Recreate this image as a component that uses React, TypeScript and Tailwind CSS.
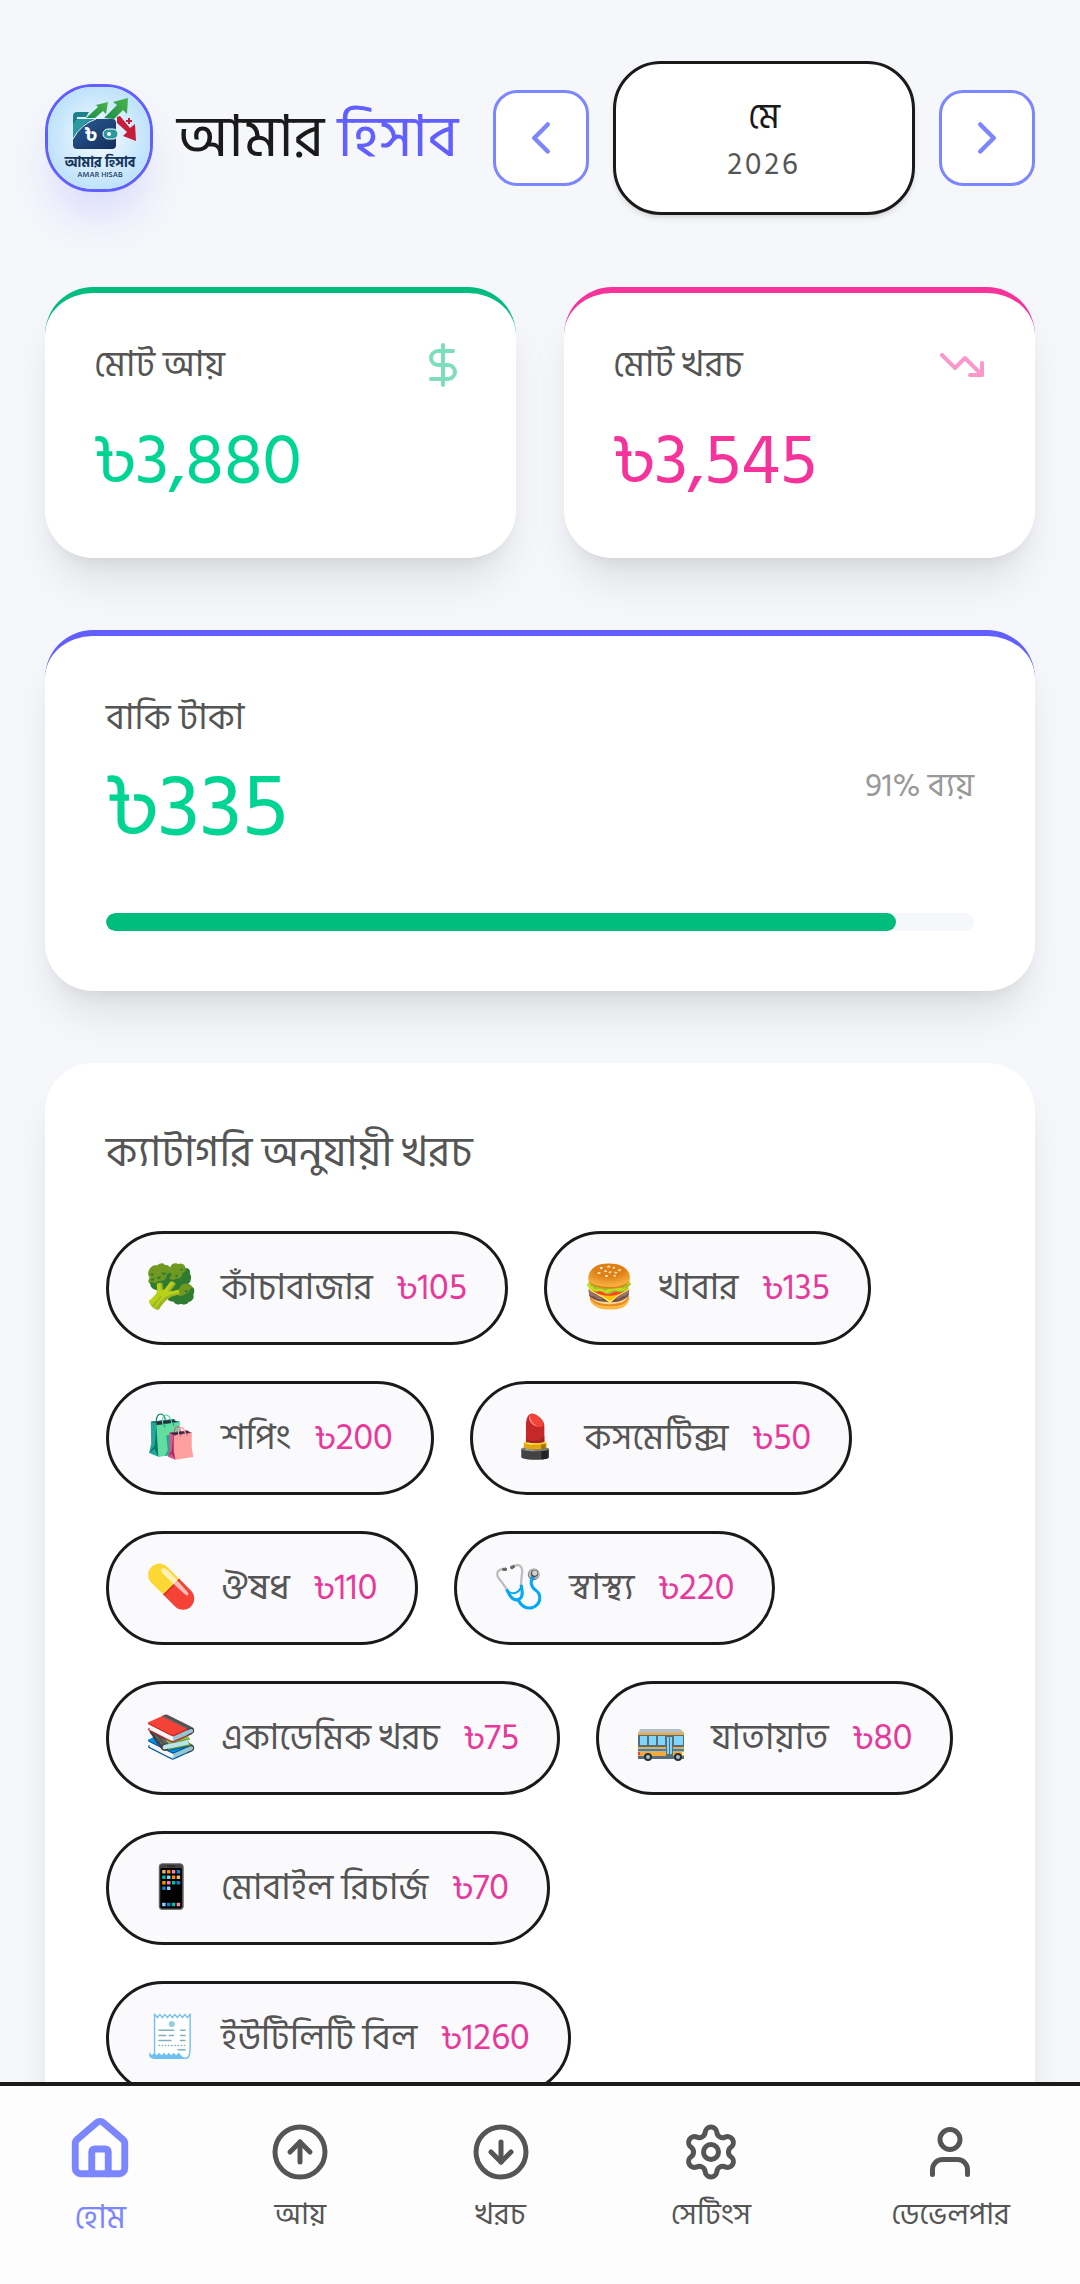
import {
  ChevronLeft,
  ChevronRight,
  CircleArrowDown,
  CircleArrowUp,
  DollarSign,
  TrendingDown,
} from "lucide-react";
import type { ReactNode } from "react";

const Logo = () => (
  <svg viewBox="8 8 102 102" className="size-full" aria-label="আমার হিসাব">
    <defs>
      <radialGradient id="sky">
        <stop offset="0.3" stopColor="#e6f4fe" />
        <stop offset="1" stopColor="#bfe3fb" />
      </radialGradient>
      <linearGradient id="wallet" x1="0" y1="0" x2="1" y2="1">
        <stop offset="0" stopColor="#2a5f97" />
        <stop offset="1" stopColor="#142c5c" />
      </linearGradient>
      <linearGradient id="leaf" x1="0" y1="1" x2="1" y2="0">
        <stop offset="0" stopColor="#1b8a4b" />
        <stop offset="1" stopColor="#4cb648" />
      </linearGradient>
    </defs>
    <rect x="8" y="8" width="102" height="102" fill="url(#sky)" />
    <path d="M37 33h12l-3 5h-9v3l-4 12V37q0-4 4-4z" fill="#1f7f8b" />
    <rect x="33" y="40" width="43" height="30" rx="4" fill="url(#wallet)" />
    <path d="M33 48q0-8 6-8h15Q41 44 33 60z" fill="#2a9aa0" />
    <path d="M33 60Q41 45 56 40" fill="none" stroke="#e6f4fe" />
    <path d="m46 39 12-11-2-2 12-3-2 12-3-3-8 7z" fill="url(#leaf)" />
    <path d="m64 39 13-13-4-3 15-4-1 16-4-4-9 9z" fill="url(#leaf)" />
    <path d="m77 38 3-1 10 12 5-4 1 17-13-5 4-4-10-9z" fill="#c41e3a" />
    <path d="M89 39v6M86 42h6" stroke="#c41e3a" strokeWidth="2" />
    <rect x="63" y="50" width="15" height="10" rx="5" fill="#2a9aa0" stroke="#fff" />
    <circle cx="69" cy="55" r="2" fill="#fff" />
    <text x="51" y="62" textAnchor="middle" fontSize="20" fontWeight="700" fill="#fff">৳</text>
    <text x="60" y="88" textAnchor="middle" fontSize="14" fontWeight="700" fill="#16365c">আমার হিসাব</text>
    <text x="60" y="98" textAnchor="middle" fontSize="8" fontWeight="500" fill="#16365c">AMAR HISAB</text>
  </svg>
);

const BusIcon = () => (
  <svg viewBox="0 -6 52 48" className="h-12 w-[52px]">
    <path d="M5 11h41q3 0 3 3v24H3V14q0-3 2-3z" fill="#f5a93b" />
    <path d="M6 9h38q3 0 4 4H4q0-4 2-4z" fill="#b9c0c4" />
    <path d="M3 15h46v12H3z" fill="#546e7a" />
    <path d="M5 16h7v9H5zM14 16h7v9h-7zM23 16h7v9h-7zM39 16h9v9h-9z" fill="#81d4fa" />
    <path d="M31 15h7v22h-7z" fill="#546e7a" />
    <path d="M32 17h2v17h-2zM35 17h2v17h-2z" fill="#81d4fa" />
    <path d="M3 30h28M38 30h11" stroke="#1e88e5" strokeWidth="2" />
    <path d="M3 36h46v3H3z" fill="#546e7a" />
    <path d="M3 32h2v3H3z" fill="#f44336" />
    <path d="M47 32h2v3h-2z" fill="#fff59d" />
    <circle cx="13" cy="37" r="4" fill="#263238" />
    <circle cx="43" cy="37" r="4" fill="#263238" />
    <circle cx="13" cy="37" r="2" fill="#b0bec5" />
    <circle cx="43" cy="37" r="2" fill="#b0bec5" />
  </svg>
);

const categories = [
  { icon: "🥦", name: "কাঁচাবাজার", amount: 105 },
  { icon: "🍔", name: "খাবার", amount: 135 },
  { icon: "🛍️", name: "শপিং", amount: 200 },
  { icon: "💄", name: "কসমেটিক্স", amount: 50 },
  { icon: "💊", name: "ঔষধ", amount: 110 },
  { icon: "🩺", name: "স্বাস্থ্য", amount: 220 },
  { icon: "📚", name: "একাডেমিক খরচ", amount: 75 },
  { icon: <BusIcon />, name: "যাতায়াত", amount: 80 },
  { icon: "📱", name: "মোবাইল রিচার্জ", amount: 70 },
  { icon: "🧾", name: "ইউটিলিটি বিল", amount: 1260 },
];

interface IStatCard {
  title: string;
  value: string;
  icon: ReactNode;
  className: string;
  valueClass: string;
}

const StatCard = ({ title, value, icon, className, valueClass }: IStatCard) => {
  return (
    <div className={`rounded-[48px] border-t-6 bg-white px-[49px] pt-12 pb-[49px] shadow-[0_30px_45px_-9px_#0000001a,0_12px_18px_-12px_#0000001a] ${className}`}>
      <div className="flex items-start justify-between">
        <p className="text-4xl leading-[48px] text-[#555]">{title}</p>
        {icon}
      </div>
      <p className={`mt-6 text-7xl leading-[96px] ${valueClass}`}>{value}</p>
    </div>
  );
};

interface INavItem {
  label: string;
  active?: boolean;
  children: ReactNode;
}

const NavItem = ({ label, active, children }: INavItem) => {
  return (
    <button
      className={
        active
          ? "flex min-w-15 flex-col items-center text-[#7c86ff]"
          : "flex min-w-15 flex-col items-center text-[#555]"
      }
    >
      <span className="flex h-[66px] items-center">{children}</span>
      <span className={active ? "text-[32px] leading-[66px]" : "text-[30px] leading-[60px]"}>{label}</span>
    </button>
  );
};

const stroke = {
  viewBox: "0 0 24 24",
  fill: "none",
  stroke: "currentColor",
  strokeLinecap: "round",
  strokeLinejoin: "round",
} as const;

export default function App() {
  const spent = 91;

  return (
    <div className="flex h-screen flex-col bg-[#f5f7fb] font-['Hind_Siliguri','Noto_Sans_Bengali','Noto_Sans',sans-serif]">
      <main className="min-h-0 flex-1 overflow-y-auto px-[45px] [scrollbar-width:none]">
        <header className="flex items-center gap-6 pt-[61px]">
          <div className="size-[108px] shrink-0 overflow-hidden rounded-[48px] border-3 border-[#625fff] shadow-[0_30px_45px_-9px_#615fff33]">
            <Logo />
          </div>
          <h1 className="min-w-0 flex-1 text-[58px] leading-[84px] whitespace-nowrap text-[#1a1a1a]">
            আমার <span className="text-[#615fff]">হিসাব</span>
          </h1>
          <button aria-label="আগের মাস" className="flex size-24 shrink-0 items-center justify-center rounded-3xl border-3 border-[#7c86ff] bg-white text-[#7c86ff]">
            <ChevronLeft className="size-[54px]" />
          </button>
          <div className="flex h-[154px] w-[302px] shrink-0 flex-col items-center justify-center rounded-[48px] border-3 border-[#1a1a1a] bg-white shadow-md">
            <p className="text-4xl leading-[54px] text-[#1a1a1a]">মে</p>
            <p className="text-[30px] leading-[42px] tracking-widest text-[#555]">2026</p>
          </div>
          <button aria-label="পরের মাস" className="flex size-24 shrink-0 items-center justify-center rounded-3xl border-3 border-[#7c86ff] bg-white text-[#7c86ff]">
            <ChevronRight className="size-[54px]" />
          </button>
        </header>

        <section className="mt-[72px] grid grid-cols-2 gap-12">
          <StatCard
            title="মোট আয়"
            value="৳3,880"
            className="border-[#00bc7d]"
            valueClass="text-[#00d492]"
            icon={<DollarSign className="size-12 text-[#00bc7d] opacity-50" />}
          />
          <StatCard
            title="মোট খরচ"
            value="৳3,545"
            className="border-[#f6339a]"
            valueClass="text-[#f6339a]"
            icon={<TrendingDown className="size-12 text-[#f6339a] opacity-50" />}
          />
        </section>

        <section className="mt-[72px] rounded-[48px] border-t-6 border-[#615fff] bg-white px-[61px] pt-[55px] pb-15 shadow-[0_30px_45px_-9px_#0000001a,0_12px_18px_-12px_#0000001a]">
          <p className="text-4xl leading-[54px] text-[#555]">বাকি টাকা</p>
          <div className="flex items-start justify-between">
            <p className="text-[90px] leading-[126px] text-[#00d492]">৳335</p>
            <p className="mt-5 text-[33px] leading-[42px] text-[#999]">{spent}% ব্যয়</p>
          </div>
          <div className="mt-[42px] h-[18px] overflow-hidden rounded-full bg-[#f5f7fb]">
            <div className="h-full rounded-full bg-[#00bc7d]" style={{ width: `${spent}%` }} />
          </div>
        </section>

        <section className="mt-[72px] rounded-[48px] bg-white px-[61px] py-15 shadow-[0_30px_45px_-9px_#0000001a,0_12px_18px_-12px_#0000001a]">
          <h2 className="text-[42px] leading-[60px] text-[#555]">ক্যাটাগরি অনুযায়ী খরচ</h2>
          <div className="mt-12 flex flex-wrap gap-9">
            {categories.map((item) => (
              <div key={item.name} className="flex h-[114px] items-center gap-6 rounded-full border-3 border-[#1a1a1a] bg-[#fafafd] pr-[38px] pl-9 text-4xl leading-[54px]">
                <span className="text-[42px]">{item.icon}</span>
                <span className="text-[#555]">{item.name}</span>
                <span className="text-[#e6399b]">৳{item.amount}</span>
              </div>
            ))}
          </div>
        </section>
      </main>

      <nav className="flex h-[202px] shrink-0 items-start justify-around border-t-4 border-[#1a1a1a] bg-[#fdfdfe] pt-[33px]">
        <NavItem label="হোম" active>
          <svg {...stroke} strokeWidth="2.5" className="size-15 origin-bottom scale-110">
            <path d="M15 21v-8a1 1 0 0 0-1-1h-4a1 1 0 0 0-1 1v8" />
            <path d="M3 10a2 2 0 0 1 .709-1.528l7-6a2 2 0 0 1 2.582 0l7 6A2 2 0 0 1 21 10v9a2 2 0 0 1-2 2H5a2 2 0 0 1-2-2z" />
          </svg>
        </NavItem>
        <NavItem label="আয়">
          <CircleArrowUp className="size-15" />
        </NavItem>
        <NavItem label="খরচ">
          <CircleArrowDown className="size-15" />
        </NavItem>
        <NavItem label="সেটিংস">
          <svg {...stroke} strokeWidth="2" className="size-15">
            <path d="M9.671 4.136a2.34 2.34 0 0 1 4.659 0 2.34 2.34 0 0 0 3.319 1.915 2.34 2.34 0 0 1 2.33 4.033 2.34 2.34 0 0 0 0 3.831 2.34 2.34 0 0 1-2.33 4.033 2.34 2.34 0 0 0-3.319 1.915 2.34 2.34 0 0 1-4.659 0 2.34 2.34 0 0 0-3.32-1.915 2.34 2.34 0 0 1-2.33-4.033 2.34 2.34 0 0 0 0-3.831A2.34 2.34 0 0 1 6.35 6.051a2.34 2.34 0 0 0 3.319-1.915" />
            <circle cx="12" cy="12" r="3" />
          </svg>
        </NavItem>
        <NavItem label="ডেভেলপার">
          <svg {...stroke} strokeWidth="2" className="size-15">
            <path d="M19 21v-2a4 4 0 0 0-4-4H9a4 4 0 0 0-4 4v2" />
            <circle cx="12" cy="7" r="4" />
          </svg>
        </NavItem>
      </nav>
    </div>
  );
}
